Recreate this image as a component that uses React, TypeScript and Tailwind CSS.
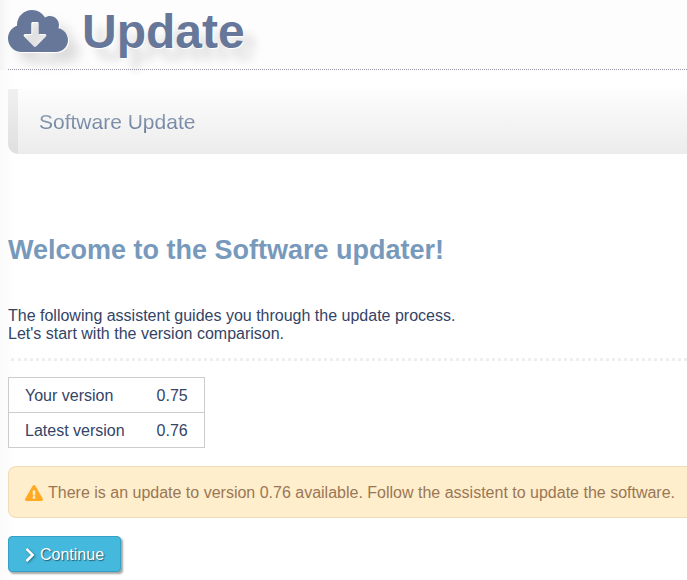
import { FaChevronRight, FaCloudDownloadAlt, FaExclamationTriangle } from 'react-icons/fa';

const versions = [
  { label: 'Your version', value: '0.75' },
  { label: 'Latest version', value: '0.76' },
];

function Header() {
  return (
    <header className="border-b border-dotted border-[#9999aa] pt-1 pb-[9px]">
      <h1 className="flex items-center gap-[14px] text-[48px] leading-14 font-bold text-[#667799]">
        <FaCloudDownloadAlt
          aria-hidden="true"
          className="mb-[2px] h-12 w-[60px] [filter:drop-shadow(1px_1px_0_#ffffff)_drop-shadow(10px_10px_6px_rgba(0,0,0,0.13))]"
        />
        <span className="[text-shadow:1px_1px_0_#ffffff,12px_12px_10px_rgba(0,0,0,0.13)]">Update</span>
      </h1>
    </header>
  );
}

function VersionTable() {
  return (
    <table className="mt-4 border-collapse border border-[#cccccc]">
      <tbody>
        {versions.map((v) => (
          <tr key={v.label} className="border-b border-[#cccccc]">
            <th scope="row" className="px-4 pt-[9px] pb-[7px] text-left font-normal">{v.label}</th>
            <td className="px-4 pt-[9px] pb-[7px]">{v.value}</td>
          </tr>
        ))}
      </tbody>
    </table>
  );
}

export default function App() {
  return (
    <div className="min-h-screen overflow-hidden bg-white bg-linear-to-r from-[#fbfbfb] to-white to-[16px] font-['Liberation_Sans',Arial,sans-serif] text-base leading-[18px] text-[#334466]">
      <div className="bg-linear-to-r from-[#f4f4f4] to-[#fdfdfd] to-[10px] pl-2">
        <Header />
      </div>

      <main className="pl-2">
        <div className="mt-[19px] rounded-bl-[10px] border-l-10 border-black/5 bg-linear-to-b from-[#fdfdfd] to-[#ececec] bg-origin-border px-[21px] py-5">
          <h2 className="bg-linear-to-b from-[#99aabb] to-[#667799] bg-clip-text text-[21px] leading-[25px] text-transparent">
            Software Update
          </h2>
        </div>

        <h3 className="mt-20 text-[27px] leading-8 font-bold text-[#7799bb]">
          Welcome to the Software updater!
        </h3>

        <p className="mt-[41px]">
          The following assistent guides you through the update process.
          <br />
          Let&apos;s start with the version comparison.
        </p>

        <hr className="mt-[15px] ml-[3px] border-t-3 border-dotted border-[#eeeeee]" />

        <VersionTable />

        <div
          role="status"
          className="mt-[18px] flex items-center gap-[5px] rounded-l-lg border border-r-0 border-[#f0ddb8] bg-[#ffeecc] px-4 pt-[17px] pb-[15px] whitespace-nowrap text-[#997755]"
        >
          <FaExclamationTriangle aria-hidden="true" className="h-4 w-[18px] shrink-0 text-[#ffaa22]" />
          <span>There is an update to version 0.76 available. Follow the assistent to update the software.</span>
        </div>

        <button
          type="button"
          className="mt-[18px] mb-2 flex items-center gap-[5px] rounded border border-[#33a0c4] bg-[#44b8dd] px-4 pt-[9px] pb-[7px] text-white shadow-[2px_2px_2px_rgba(0,0,0,0.35)] [text-shadow:1px_1px_1px_rgba(0,0,0,0.5)]"
        >
          <FaChevronRight aria-hidden="true" className="h-4 w-[10px] drop-shadow-[1px_1px_1px_rgba(0,0,0,0.4)]" />
          Continue
        </button>
      </main>
    </div>
  );
}
